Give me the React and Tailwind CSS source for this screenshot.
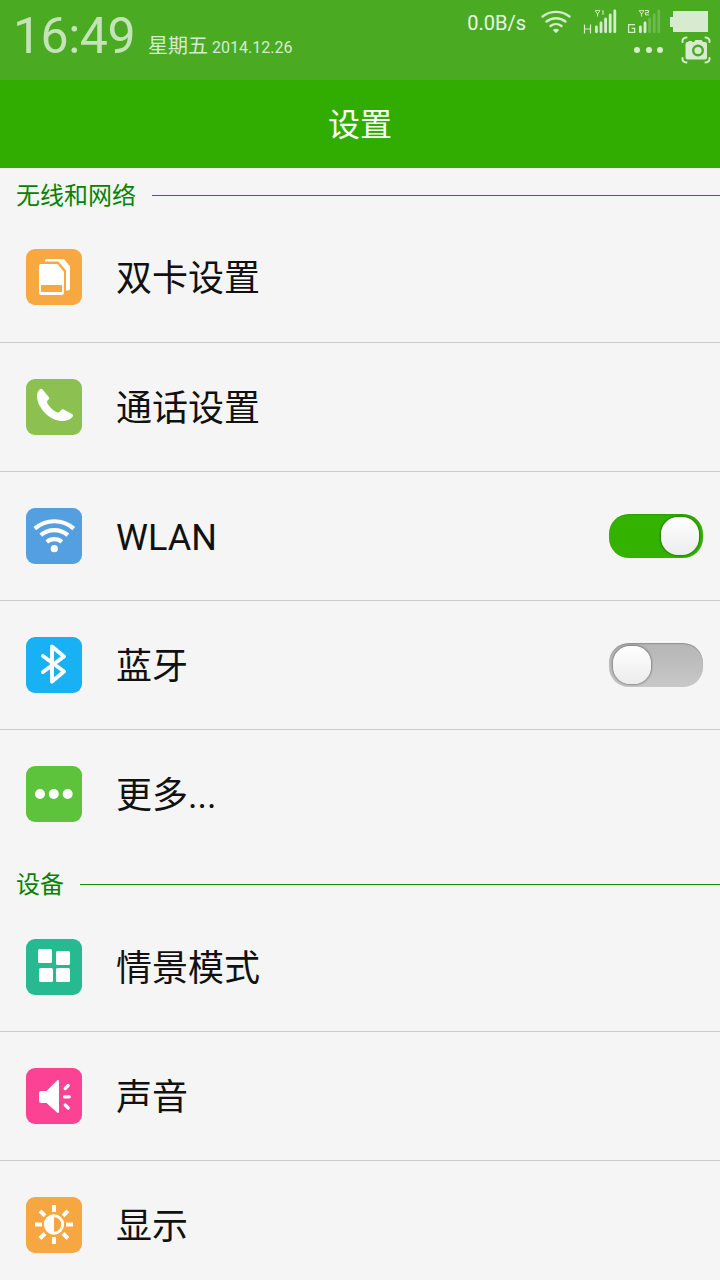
import React, { useState } from "react";

const svgProps = { viewBox: "0 0 56 56", className: "w-14 h-14 block" };

function SimIcon() {
  return (
    <svg {...svgProps} fill="#fff">
      <path d="M19 12.500v-1q0-1.500 1.500-1.500h17.500l6 7.500v22q0 2-2 2h-2V21.500l-7.500-9z" />
      <path d="M15 15h16.500l6.500 8v20.500q0 2.500-2.500 2.500h-20q-2.500 0-2.500-2.500v-26.500q0-2 2-2z" />
      <path d="M15 36h21v7H15z" fill="#f7a840" />
    </svg>
  );
}

function PhoneIcon() {
  return (
    <svg {...svgProps} fill="#fff">
      <path d="M14.500 10c-2 .8-3.500 4-3.500 7.500 0 5.500 3.500 12 8.500 17 5 5 11.500 7.500 17 7.500 5 0 9.500-2.500 10.500-5 .2-.8-.2-1.400-1-1.900l-7.800-4.400c-1.400-.8-2.400-.4-3.400.8l-1 1.300c-1 1-2.200 1-3.600.2-3-1.600-7.300-5.500-8.700-8.500-.7-1.300-.5-2.300.3-3.200l1-1.100c.5-.6.5-1.200.2-2L17 11c-.6-1-1.400-1.400-2.500-1z" />
    </svg>
  );
}

function WlanIcon() {
  return (
    <svg {...svgProps} fill="none" stroke="#fff" strokeWidth="4.200">
      <path d="M8.800 20.600a29.500 29.500 0 0 1 39 0" />
      <path d="M14.800 27.200a20.500 20.500 0 0 1 27 0" />
      <path d="M20.800 34a11.500 11.500 0 0 1 15 0" />
      <circle cx="28.300" cy="40.700" r="3.600" fill="#fff" stroke="none" />
    </svg>
  );
}

function BluetoothIcon() {
  return (
    <svg {...svgProps} fill="none" stroke="#fff" strokeWidth="4" strokeLinecap="round" strokeLinejoin="round">
      <path d="M17 19l21 15.500L26 44.500V9.500l12 10L17 35" />
    </svg>
  );
}

function MoreIcon() {
  return (
    <svg {...svgProps} fill="#fff">
      <circle cx="14" cy="28" r="5" />
      <circle cx="27.800" cy="28" r="5" />
      <circle cx="41.700" cy="28" r="5" />
    </svg>
  );
}

function ProfileIcon() {
  return (
    <svg {...svgProps} fill="#fff">
      <rect x="12" y="10" width="14" height="14" rx="1.500" />
      <rect x="30" y="12" width="14" height="14" rx="1.500" />
      <rect x="13" y="29" width="14" height="14" rx="1.500" />
      <rect x="30" y="29" width="14" height="14" rx="1.500" />
    </svg>
  );
}

function SoundIcon() {
  return (
    <svg {...svgProps} fill="#fff">
      <path d="M15 23h5.500L31 12.500c.8-.8 2-.5 2 .8v30.400c0 1.300-1.200 1.600-2 .8L20.500 35H15q-2 0-2-2v-8q0-2 2-2z" />
      <path d="M39.200 20.500l3-3M38.500 28.800h4.800M39.200 37l3 3" stroke="#fff" strokeWidth="3.200" strokeLinecap="round" />
    </svg>
  );
}

function DisplayIcon() {
  return (
    <svg {...svgProps} fill="none" stroke="#fff">
      <circle cx="28" cy="27.500" r="8.700" strokeWidth="2.900" />
      <path d="M28 18.500a9 9 0 0 0 0 18z" fill="#fff" stroke="none" />
      <path
        d="M28 8v7M28 40v7M9 27.500h7M40 27.500h7M14 13.800l5 5M37 36.500l5 5M42 13.800l-5 5M19 36.500l-5 5"
        strokeWidth="4"
      />
    </svg>
  );
}

function StatusWifi() {
  return (
    <svg viewBox="0 0 32 26" className="w-8 h-[26px]" fill="none" stroke="#d8ead0" strokeWidth="2.400" strokeLinecap="round">
      <path d="M2.500 7.500a22 22 0 0 1 27 0" />
      <path d="M6.500 12.500a15.500 15.500 0 0 1 19 0" />
      <path d="M10.500 17a9 9 0 0 1 11 0" />
      <path d="M12.800 21q3.200-2.600 6.400 0l-2.400 2.600q-.8.600-1.600 0z" fill="#d8ead0" stroke="none" />
    </svg>
  );
}

function Signal({ network, sim, level }) {
  return (
    <svg viewBox="0 0 34 26" className="w-[34px] h-[26px]" fill="none" stroke="#d8ead0">
      {network === "H" ? (
        <path d="M1.500 15.500v9M7.500 15.500v9M1.500 20h6" strokeWidth="1.200" />
      ) : (
        <path d="M8 15.600H1.600v7.800h6v-4H4.600" strokeWidth="1.300" />
      )}
      <path d="M12.200 1.600l2.400 3.600L17 1.600zM14.600 4.500v3.200" strokeWidth="0.900" />
      {sim === 1 ? <path d="M20 1.200v4.500" strokeWidth="1.100" /> : <path d="M18 1.500h3.500v2.200h-3v2.200h3.500" strokeWidth="1" />}
      {[18, 14, 10, 6, 2].map((top, i) => (
        <path
          key={top}
          d={`M${13.400 + i * 4.600} ${top}V22.800`}
          strokeWidth="2.800"
          strokeLinecap="round"
          opacity={i < level ? 1 : 0.25}
        />
      ))}
    </svg>
  );
}

function CameraIcon() {
  return (
    <svg viewBox="0 0 30 28" className="w-[30px] h-7" fill="none" stroke="#d8ead0" strokeWidth="2" strokeLinecap="round">
      <path d="M1.500 6V5q0-3 4-3.500M24.500 1.500q4 .5 4 3.500v1M1.500 22v1q0 3 4 3.500M24.500 26.500q4-.5 4-3.500v-1" />
      <path
        d="M6.500 6h1V5h3.500v1h2l1.500-2h6l1.500 2h2q2 0 2 2v13.500q0 2-2 2H6.500q-2 0-2-2V8q0-2 2-2z"
        fill="#d8ead0"
        stroke="none"
      />
      <circle cx="17" cy="14.500" r="4.800" stroke="#4aab23" strokeWidth="2.400" />
    </svg>
  );
}

function StatusBar() {
  return (
    <div className="h-20 bg-[#4aab23] flex justify-between">
      <div className="flex items-baseline pl-[13px] h-20 text-[#d8ead0]">
        <span className="w-[124px] text-[50px] leading-[73px] text-[#c5e3b8] tracking-[-0.5px]">16:49</span>
        <span className="ml-[11px] text-[20px] leading-5">星期五</span>
        <span className="ml-1 text-[16px] leading-5">2014.12.26</span>
      </div>
      <div className="flex flex-col items-end">
        <div className="flex h-9 pt-[9px] pr-3">
          <span className="text-[20px] leading-7 text-[#ecf6e8] mr-[14px]">0.0B/s</span>
          <StatusWifi />
          <div className="ml-[11px] flex gap-[10px]">
            <Signal network="H" sim={1} level={5} />
            <Signal network="G" sim={2} level={2} />
          </div>
          <div className="ml-[9px] mt-[2px] h-[21px] flex items-center">
            <div className="w-[3px] h-[10px] bg-[#d8ead0]" />
            <div className="w-[35px] h-[21px] bg-[#d8ead0]" />
          </div>
        </div>
        <div className="flex items-center h-7 pr-[9px]">
          <div className="flex gap-[5.500px] mr-[18px]">
            <span className="w-[6px] h-[6px] rounded-full bg-[#d8ead0]" />
            <span className="w-[6px] h-[6px] rounded-full bg-[#d8ead0]" />
            <span className="w-[6px] h-[6px] rounded-full bg-[#d8ead0]" />
          </div>
          <CameraIcon />
        </div>
      </div>
    </div>
  );
}

function Switch({ checked, onChange }) {
  return (
    <button
      role="switch"
      aria-checked={checked}
      onClick={() => onChange(!checked)}
      className={`w-[94px] h-11 rounded-[20px] px-[4px] flex items-center ${
        checked
          ? "justify-end bg-[#33b300] shadow-[inset_0_1px_1px_rgba(0,0,0,0.12)]"
          : "justify-start bg-linear-to-b from-[#b5b5b5] to-[#c8c8c8] shadow-[inset_0_1px_1px_rgba(0,0,0,0.2)]"
      }`}
    >
      <span className="w-[38px] h-[38px] rounded-[17px] bg-linear-to-b from-white to-[#ececec] shadow-[0_0_2px_1px_rgba(0,0,0,0.3)]" />
    </button>
  );
}

function SectionTitle({ children, className = "h-[45px] pt-2" }) {
  return (
    <div className={`flex items-center pl-4 gap-4 ${className}`}>
      <h2 className="text-[24px] leading-8 text-[#058205]">{children}</h2>
      <div className="flex-1 h-px bg-[#148c14]" />
    </div>
  );
}

function SettingRow({ icon, color, label, className = "h-[129px] border-b border-[#cbcbcb]", children }) {
  return (
    <div className={`flex items-center pl-[26px] pr-[17px] ${className}`}>
      <div className={`w-14 h-14 rounded-[9px] ${color}`}>{icon}</div>
      <span className="ml-[34px] pt-1 flex-1 text-[36px] leading-[48px] text-[#111]">{label}</span>
      {children}
    </div>
  );
}

export default function App() {
  const [wlan, setWlan] = useState(true);
  const [bluetooth, setBluetooth] = useState(false);

  return (
    <div className="w-[720px] h-[1280px] overflow-hidden bg-[#f5f5f5] font-[Roboto,'Noto_Sans_CJK_SC',sans-serif]">
      <StatusBar />
      <header className="h-[88px] pt-[2px] bg-[#30ad00] flex items-center justify-center">
        <h1 className="text-[32px] leading-10 text-white">设置</h1>
      </header>

      <SectionTitle className="h-[45px] pt-[10px]">无线和网络</SectionTitle>
      <SettingRow
        icon={<SimIcon />}
        color="bg-[#f7a840]"
        label="双卡设置"
        className="h-[130px] pb-px border-b border-[#cbcbcb]"
      />
      <SettingRow icon={<PhoneIcon />} color="bg-[#8cc152]" label="通话设置" />
      <SettingRow icon={<WlanIcon />} color="bg-[#549fdf]" label="WLAN">
        <Switch checked={wlan} onChange={setWlan} />
      </SettingRow>
      <SettingRow icon={<BluetoothIcon />} color="bg-[#17b1f4]" label="蓝牙">
        <Switch checked={bluetooth} onChange={setBluetooth} />
      </SettingRow>
      <SettingRow icon={<MoreIcon />} color="bg-[#5dc23c]" label="更多..." className="h-32" />

      <SectionTitle>设备</SectionTitle>
      <SettingRow icon={<ProfileIcon />} color="bg-[#27b98f]" label="情景模式" />
      <SettingRow icon={<SoundIcon />} color="bg-[#fc4393]" label="声音" />
      <SettingRow icon={<DisplayIcon />} color="bg-[#f6a741]" label="显示" />
    </div>
  );
}
